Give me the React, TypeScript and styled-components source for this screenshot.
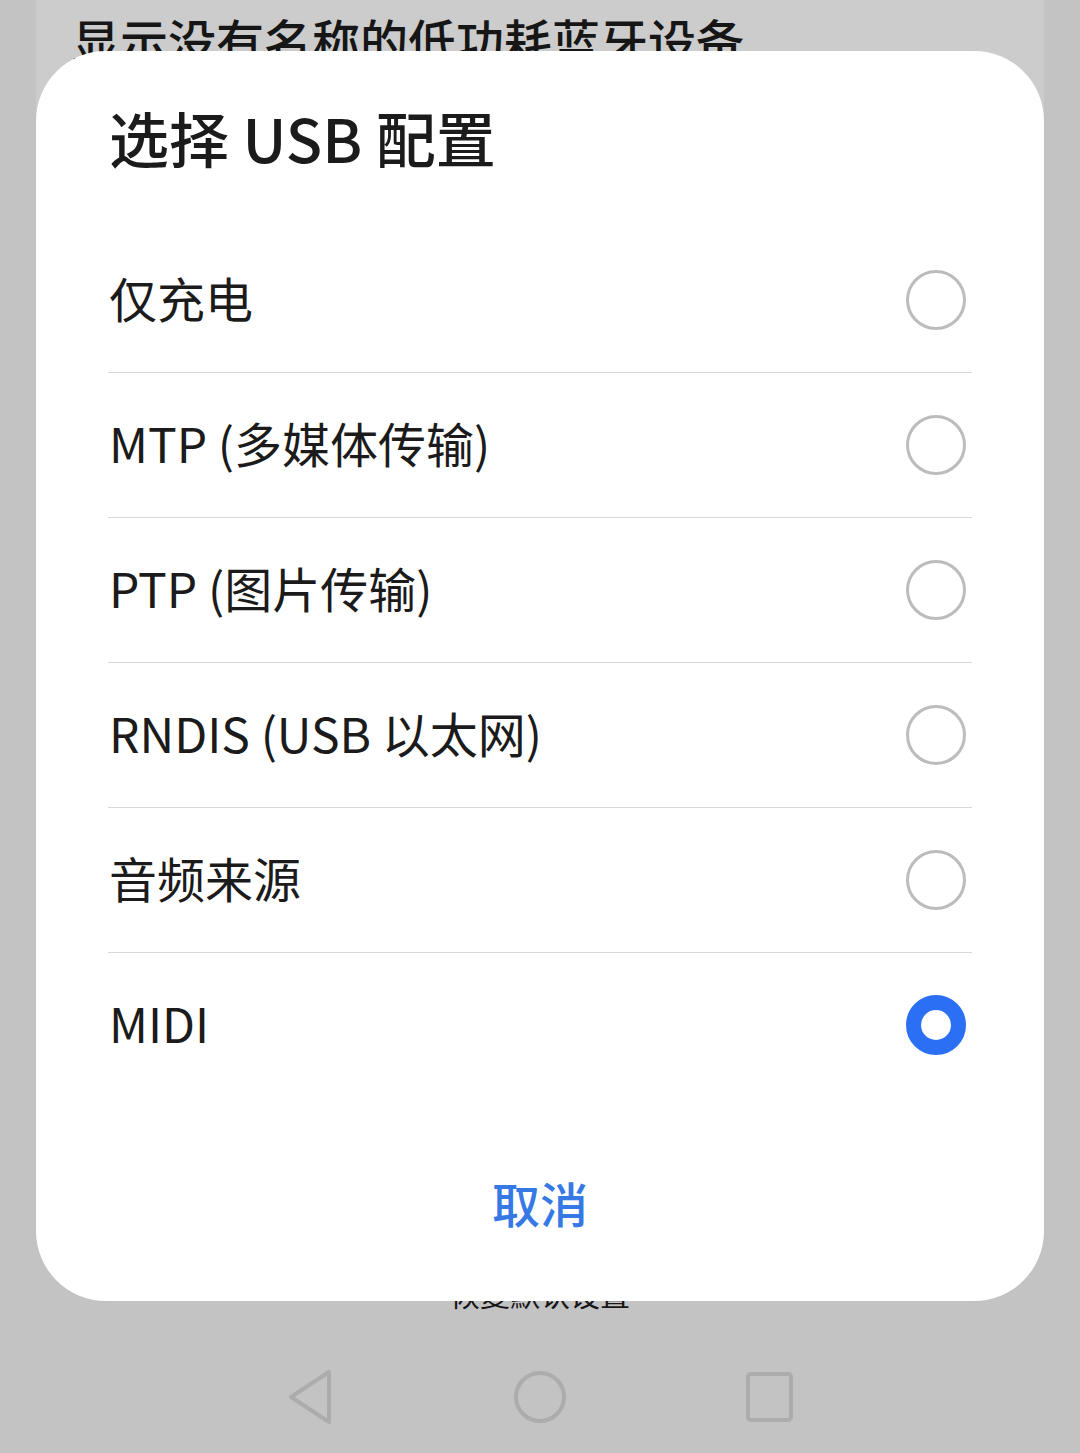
import { FC, useState } from "react"
import styled, { createGlobalStyle } from "styled-components"

const GlobalStyle = createGlobalStyle`
  html, body {
    margin: 0;
    padding: 0;
    background: #c3c3c4;
  }
  body {
    font-family: "Noto Sans CJK SC", "Noto Sans", sans-serif;
    -webkit-font-smoothing: antialiased;
  }
`

const Page = styled.div`
  position: relative;
  width: 1080px;
  height: 1453px;
  overflow: hidden;
  display: flex;
  flex-flow: column;
  background: #c3c3c4;
`
const BehindCard = styled.div`
  margin: 0 36px;
  height: 700px;
  background: #cccccc;
  padding: 10px 36px 0;
  box-sizing: border-box;
`
const BehindText = styled.div`
  font-size: 48px;
  line-height: 58px;
  font-weight: 500;
  color: #161616;
`
const Spacer = styled.div`
  flex: 1;
`
const ResetText = styled.div`
  text-align: center;
  font-size: 30px;
  line-height: 36px;
  color: #161616;
  margin-bottom: 29px;
`
const NavBar = styled.nav`
  height: 113px;
  display: flex;
  align-items: center;
  justify-content: center;
  gap: 170px;
`
const NavSlot = styled.div`
  width: 60px;
  height: 60px;
  display: flex;
  align-items: center;
  justify-content: center;
`

const Dialog = styled.div`
  position: absolute;
  top: 51px;
  left: 36px;
  width: 1008px;
  height: 1250px;
  background: #ffffff;
  border-radius: 70px;
  display: flex;
  flex-flow: column;
  padding-top: 51px;
  box-sizing: border-box;
`
const Title = styled.h2`
  margin: 0;
  padding: 0 74px 3px 73px;
  font-size: 60px;
  line-height: 70px;
  font-weight: 500;
  color: #1b1b1b;
`
const OptionList = styled.ul`
  list-style: none;
  margin: 53px 72px 0;
  padding: 0;
`
const Option = styled.li`
  height: 144px;
  display: flex;
  align-items: center;
  justify-content: space-between;
  border-bottom: 1px solid #d7d7d7;
  cursor: pointer;

  &:last-child {
    border-bottom: none;
  }
`
const OptionLabel = styled.span`
  padding: 0 0 7px 1px;
  font-size: 48px;
  line-height: 60px;
  color: #1b1b1b;
`
const Radio = styled.span<{ $checked: boolean }>`
  width: 60px;
  height: 60px;
  margin-right: 6px;
  box-sizing: border-box;
  border-radius: 50%;
  border: ${(p) => (p.$checked ? "15px solid #2a6ff4" : "3px solid #bcbcbc")};
  background: #ffffff;
`
const Footer = styled.div`
  padding-top: 77px;
  display: flex;
  justify-content: center;
`
const CancelButton = styled.button`
  border: none;
  background: none;
  padding: 0;
  font-family: inherit;
  font-size: 48px;
  line-height: 56px;
  font-weight: 500;
  color: #3679e4;
  cursor: pointer;
`

const options = [
  "仅充电",
  "MTP (多媒体传输)",
  "PTP (图片传输)",
  "RNDIS (USB 以太网)",
  "音频来源",
  "MIDI",
]

const BackIcon: FC = () => (
  <svg width="46" height="58" viewBox="0 0 46 58">
    <path
      d="M42 4 L4 29 L42 54 Z"
      fill="none"
      stroke="#acacac"
      strokeWidth="4"
      strokeLinejoin="round"
    />
  </svg>
)
const HomeIcon: FC = () => (
  <svg width="54" height="54" viewBox="0 0 54 54">
    <circle cx="27" cy="27" r="24" fill="none" stroke="#acacac" strokeWidth="4" />
  </svg>
)
const RecentIcon: FC = () => (
  <svg width="50" height="52" viewBox="0 0 50 52">
    <rect x="3" y="3" width="43" height="46" rx="3" fill="none" stroke="#acacac" strokeWidth="4" />
  </svg>
)

const App: FC = () => {
  const [selected, setSelected] = useState("MIDI")

  return (
    <Page>
      <GlobalStyle />
      <BehindCard>
        <BehindText>显示没有名称的低功耗蓝牙设备</BehindText>
      </BehindCard>
      <Spacer />
      <ResetText>恢复默认设置</ResetText>
      <NavBar>
        <NavSlot>
          <BackIcon />
        </NavSlot>
        <NavSlot>
          <HomeIcon />
        </NavSlot>
        <NavSlot>
          <RecentIcon />
        </NavSlot>
      </NavBar>

      <Dialog>
        <Title>选择 USB 配置</Title>
        <OptionList>
          {options.map((o) => (
            <Option key={o} onClick={() => setSelected(o)}>
              <OptionLabel>{o}</OptionLabel>
              <Radio $checked={selected === o} />
            </Option>
          ))}
        </OptionList>
        <Footer>
          <CancelButton>取消</CancelButton>
        </Footer>
      </Dialog>
    </Page>
  )
}

export default App
